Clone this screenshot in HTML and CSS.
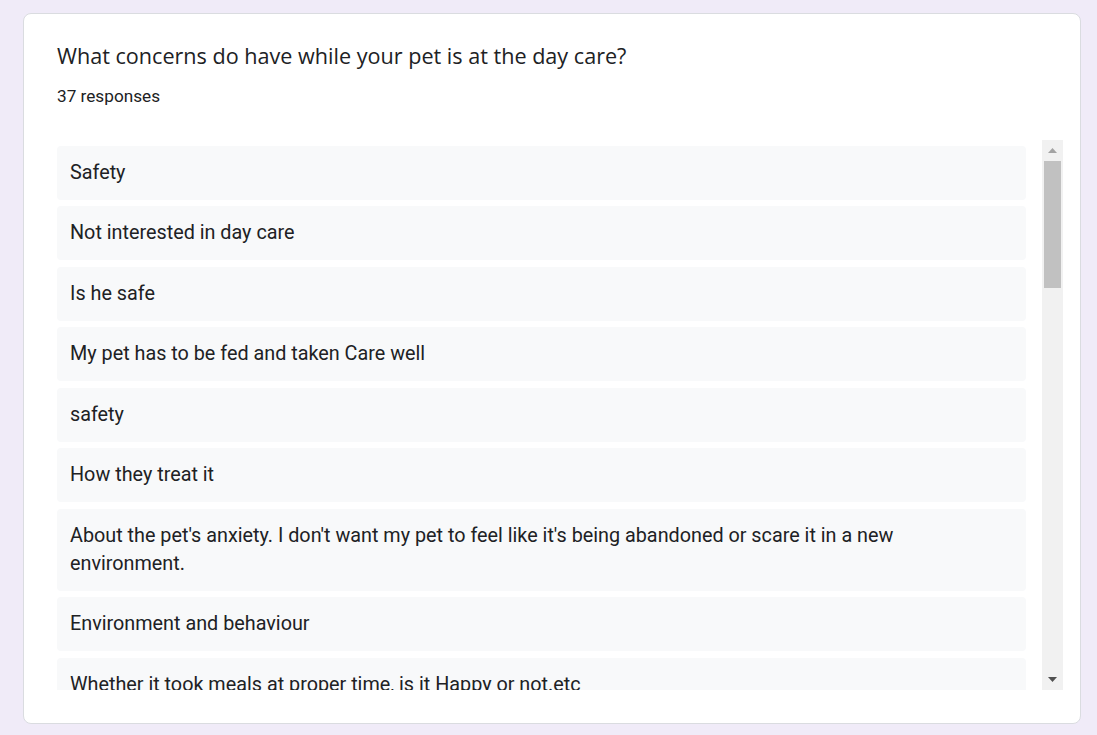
FILE: index.html
```html
<!DOCTYPE html>
<html lang="en">
<head>
<meta charset="utf-8">
<title>Responses</title>
<link rel="stylesheet" href="styles.css">
</head>
<body>
<div class="card">
  <h1 class="title">What concerns do have while your pet is at the day care?</h1>
  <div class="count">37 responses</div>
  <div class="listwrap">
    <div class="list">
      <div class="item">Safety</div>
      <div class="item">Not interested in day care</div>
      <div class="item">Is he safe</div>
      <div class="item">My pet has to be fed and taken Care well</div>
      <div class="item">safety</div>
      <div class="item">How they treat it</div>
      <div class="item">About the pet's anxiety. I don't want my pet to feel like it's being abandoned or scare it in a new environment.</div>
      <div class="item">Environment and behaviour</div>
      <div class="item">Whether it took meals at proper time, is it Happy or not.etc</div>
    </div>
    <div class="scrollbar">
      <div class="sb-btn">
        <svg width="9" height="5" viewBox="0 0 9 5"><polygon points="0,5 9,5 4.5,0" fill="#a3a3a3"/></svg>
      </div>
      <div class="sb-thumb"></div>
      <div class="sb-space"></div>
      <div class="sb-btn">
        <svg width="9" height="5" viewBox="0 0 9 5"><polygon points="0,0 9,0 4.5,5" fill="#505050"/></svg>
      </div>
    </div>
  </div>
</div>
</body>
</html>
```
FILE: styles.css
```css
html, body {
  margin: 0;
  padding: 0;
  background: #f0ebf8;
}
body {
  padding: 13px 0 0 23px;
  font-family: Roboto, "Liberation Sans", Arial, sans-serif;
  color: #202124;
}
.card {
  box-sizing: border-box;
  width: 1058px;
  height: 711px;
  background: #ffffff;
  border: 1px solid #dadce0;
  border-radius: 8px;
  padding: 26px 16px 0 33px;
  display: flex;
  flex-direction: column;
}
.title {
  margin: 0;
  font-family: "Open Sans", Roboto, sans-serif;
  font-weight: 400;
  font-size: 21.6px;
  line-height: 32px;
  color: #202124;
}
.count {
  margin-top: 12px;
  font-size: 17.2px;
  line-height: 24px;
  color: #202124;
}
.listwrap {
  margin-top: 32px;
  display: flex;
  gap: 16px;
  height: 550px;
}
.list {
  width: 969px;
  height: 550px;
  overflow: hidden;
  padding-top: 5.5px;
  box-sizing: border-box;
  display: flex;
  flex-direction: column;
  gap: 6.5px;
}
.item {
  flex: none;
  background: #f8f9fa;
  border-radius: 4px;
  padding: 13px 60px 13px 13px;
  font-size: 19.8px;
  line-height: 28px;
  color: #202124;
}
.scrollbar {
  width: 21px;
  height: 550px;
  background: #f1f1f1;
  display: flex;
  flex-direction: column;
}
.sb-btn {
  height: 21px;
  display: flex;
  align-items: center;
  justify-content: center;
  flex: none;
}
.sb-btn svg {
  display: block;
}
.sb-thumb {
  flex: none;
  height: 127px;
  margin: 0 2px;
  background: #c1c1c1;
}
.sb-space {
  flex: 1;
}
```
